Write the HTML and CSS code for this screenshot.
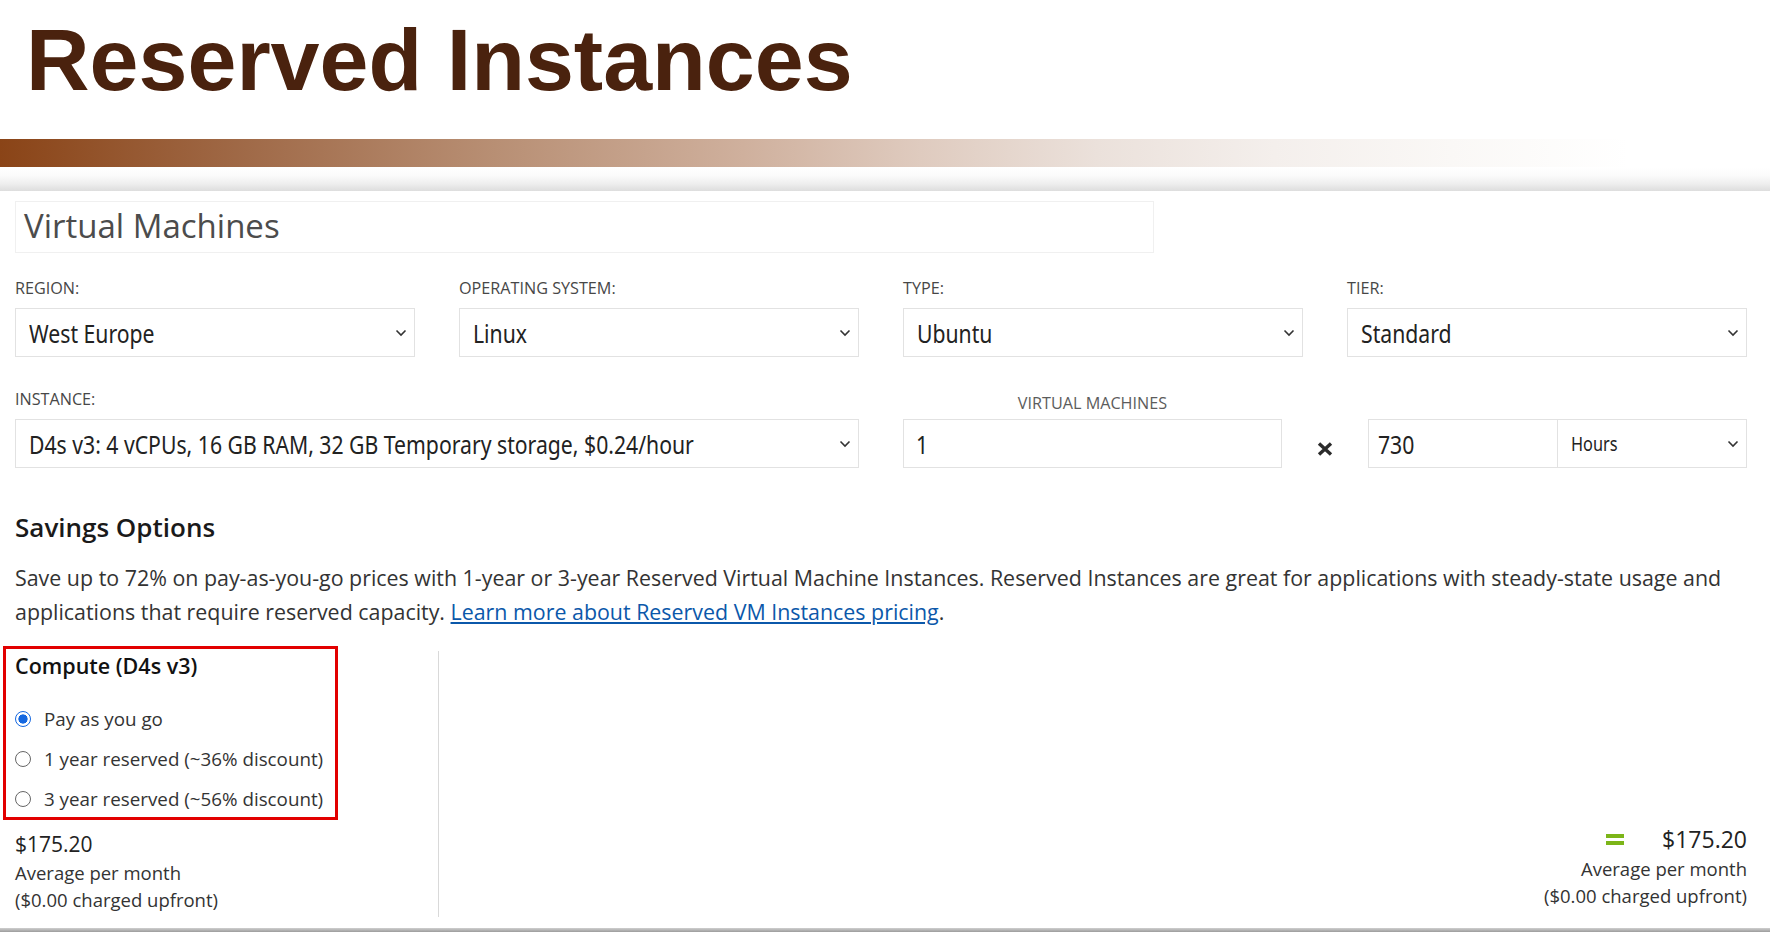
FILE: index.html
```html
<!DOCTYPE html>
<html lang="en">
<head>
<meta charset="utf-8">
<title>Reserved Instances</title>
<link rel="stylesheet" href="styles.css">
</head>
<body>
<header class="slide-header">
  <h1 class="slide-title">Reserved Instances</h1>
</header>
<div class="accent-bar"></div>
<div class="panel-shadow"></div>
<main class="panel">
  <div class="vm-head"><h2>Virtual Machines</h2></div>

  <div class="grid-row">
    <div class="field">
      <span class="field-label">REGION:</span>
      <div class="select"><span class="val">West Europe</span><svg class="chev" width="12" height="8" viewBox="0 0 12 8"><path d="M1.5 1.5 L6 6 L10.5 1.5" fill="none" stroke="#333" stroke-width="1.6"/></svg></div>
    </div>
    <div class="field">
      <span class="field-label">OPERATING SYSTEM:</span>
      <div class="select"><span class="val">Linux</span><svg class="chev" width="12" height="8" viewBox="0 0 12 8"><path d="M1.5 1.5 L6 6 L10.5 1.5" fill="none" stroke="#333" stroke-width="1.6"/></svg></div>
    </div>
    <div class="field">
      <span class="field-label">TYPE:</span>
      <div class="select"><span class="val">Ubuntu</span><svg class="chev" width="12" height="8" viewBox="0 0 12 8"><path d="M1.5 1.5 L6 6 L10.5 1.5" fill="none" stroke="#333" stroke-width="1.6"/></svg></div>
    </div>
    <div class="field">
      <span class="field-label">TIER:</span>
      <div class="select"><span class="val">Standard</span><svg class="chev" width="12" height="8" viewBox="0 0 12 8"><path d="M1.5 1.5 L6 6 L10.5 1.5" fill="none" stroke="#333" stroke-width="1.6"/></svg></div>
    </div>
  </div>

  <div class="row2">
    <div class="field instance">
      <span class="field-label">INSTANCE:</span>
      <div class="select"><span class="val">D4s v3: 4 vCPUs, 16 GB RAM, 32 GB Temporary storage, $0.24/hour</span><svg class="chev" width="12" height="8" viewBox="0 0 12 8"><path d="M1.5 1.5 L6 6 L10.5 1.5" fill="none" stroke="#333" stroke-width="1.6"/></svg></div>
    </div>
    <div class="field vm">
      <span class="field-label vm-label">VIRTUAL MACHINES</span>
      <div class="input vm-input"><span class="val">1</span></div>
    </div>
    <div class="times"><svg width="16" height="14" viewBox="0 0 16 14"><path d="M2 1.5 L14 12.5 M14 1.5 L2 12.5" fill="none" stroke="#2b2b2b" stroke-width="3.4"/></svg></div>
    <div class="hours">
      <div class="input hours-input"><span class="val">730</span></div>
      <div class="select hours-select"><span class="val">Hours</span><svg class="chev" width="12" height="8" viewBox="0 0 12 8"><path d="M1.5 1.5 L6 6 L10.5 1.5" fill="none" stroke="#333" stroke-width="1.6"/></svg></div>
    </div>
  </div>

  <h3 class="savings-title">Savings Options</h3>
  <p class="savings-text">Save up to 72% on pay-as-you-go prices with 1-year or 3-year Reserved Virtual Machine Instances. Reserved Instances are great for applications with steady-state usage and applications that require reserved capacity. <a href="#">Learn more about Reserved VM Instances pricing</a>.</p>

  <div class="results">
    <div class="left-col">
      <div class="compute-box">
        <h4>Compute (D4s v3)</h4>
        <div class="opt-list">
          <label class="opt"><input type="radio" name="plan" checked><span>Pay as you go</span></label>
          <label class="opt"><input type="radio" name="plan"><span>1 year reserved (~36% discount)</span></label>
          <label class="opt"><input type="radio" name="plan"><span>3 year reserved (~56% discount)</span></label>
        </div>
      </div>
      <div class="price">
        <div class="amount">$175.20</div>
        <div class="sub">Average per month</div>
        <div class="sub last">($0.00 charged upfront)</div>
      </div>
    </div>
    <div class="divider"></div>
    <div class="right-col">
      <div class="total"><span class="eq"></span><span>$175.20</span></div>
      <div class="sub">Average per month</div>
      <div class="sub last">($0.00 charged upfront)</div>
    </div>
  </div>
</main>
<div class="bottom-edge"></div>
</body>
</html>
```

FILE: styles.css
```css
* { box-sizing: border-box; }
html, body { margin: 0; padding: 0; background: #fff; }
body {
  width: 1770px;
  height: 932px;
  overflow: hidden;
  font-family: "Open Sans", "Noto Sans", sans-serif;
  color: #333;
}

.slide-header { height: 139px; padding: 16px 0 0 26px; }
.slide-title {
  margin: 0;
  font: 700 88px/88px "Liberation Sans", Arial, sans-serif;
  color: #4a220e;
}

.accent-bar {
  height: 28px;
  background: linear-gradient(to right,
    #8a4417 0%, #a06a48 14%, #b88f74 28%, #cfb09d 42%,
    #dfcbbf 52%, #ebe1db 62%, #f4efec 72%, #faf8f6 82%, rgba(255,255,255,0) 92%);
}
.panel-shadow {
  height: 24px;
  background: linear-gradient(to bottom, #ffffff 0%, #fbfbfb 35%, #eeeeee 70%, #dddddd 100%);
}

.panel { padding: 10px 23px 0 15px; }

.vm-head {
  width: 1139px;
  height: 52px;
  border: 1px solid #f0f0f0;
  padding: 1px 0 3px 8px;
}
.vm-head h2 {
  margin: 0;
  font: 400 33px/46px "Open Sans", sans-serif;
  color: #4c4c4c;
}

.grid-row {
  display: grid;
  grid-template-columns: repeat(4, 400px);
  column-gap: 44px;
  margin-top: 25px;
}
.field { display: flex; flex-direction: column; }
.field-label {
  font: 400 16.2px/20px "Open Sans", sans-serif;
  color: #474747;
  margin-bottom: 10px;
}

.select, .input {
  height: 49px;
  border: 1px solid #e2e2e2;
  display: flex;
  align-items: center;
  font-family: "Noto Sans", "Open Sans", sans-serif;
  font-size: 26px;
  color: #222;
  white-space: nowrap;
  overflow: hidden;
}
.val {
  flex: 1;
  min-width: 0;
  display: block;
  transform: scaleX(0.815);
  transform-origin: 0 50%;
}
.select { padding: 0 7px 0 13px; }
.input { padding-left: 12px; }
.chev { flex: none; margin-left: 8px; }

.row2 { display: flex; align-items: flex-end; margin-top: 32px; }
.instance { width: 844px; margin-right: 44px; }
.vm { width: 379px; }
.vm-label { text-align: center; color: #5c5c5c; margin-bottom: 6px; }
.times {
  width: 86px;
  height: 49px;
  padding-top: 10px;
  display: flex;
  align-items: center;
  justify-content: center;
}
.hours { width: 379px; display: flex; }
.hours-input { width: 190px; padding-left: 9px; }
.hours-select { width: 189px; border-left: none; font-size: 20px; padding-left: 13px; }

.savings-title {
  margin: 41px 0 0;
  font: 600 26px/36px "Open Sans", sans-serif;
  color: #1a1a1a;
}
.savings-text {
  margin: 16px 0 0;
  font: 400 21.4px/34px "Open Sans", sans-serif;
  color: #333;
}
.savings-text a { color: #0b58aa; text-decoration: underline; }

.results { display: flex; height: 271px; margin-top: 17px; }
.left-col { width: 423px; flex: none; }
.compute-box {
  margin-left: -12px;
  width: 335px;
  height: 174px;
  border: 3px solid #e20000;
  padding: 2px 0 0 9px;
}
.compute-box h4 {
  margin: 0;
  font: 600 21.5px/30px "Open Sans", sans-serif;
  color: #111;
}
.opt-list { margin-top: 18px; }
.opt {
  display: flex;
  align-items: center;
  gap: 13px;
  height: 40px;
  font: 400 18.8px/26px "Open Sans", sans-serif;
  color: #333;
}
.opt input {
  appearance: none;
  -webkit-appearance: none;
  flex: none;
  width: 16px;
  height: 16px;
  margin: 0;
  border: 1px solid #666;
  border-radius: 50%;
  background: #fff;
}
.opt input:checked {
  border: 1.5px solid #1467e0;
  background: radial-gradient(circle, #1467e0 0 4.3px, #fff 4.9px);
}

.price { margin-top: 9px; }
.amount { font-size: 21px; line-height: 30px; color: #222; }
.sub { font-size: 18.5px; line-height: 27px; color: #333; }
.sub.last { line-height: 28px; }

.divider { width: 1px; flex: none; background: #d9d9d9; margin-top: 5px; height: 266px; }

.right-col {
  flex: 1;
  display: flex;
  flex-direction: column;
  align-items: flex-end;
  justify-content: flex-end;
  padding-bottom: 7px;
}
.total {
  display: flex;
  align-items: center;
  height: 32px;
  font-size: 23px;
  line-height: 32px;
  color: #222;
}
.eq {
  width: 18px;
  height: 11px;
  border-top: 4px solid #7cb518;
  border-bottom: 4px solid #7cb518;
  margin-right: 38px;
}

.bottom-edge {
  margin-top: 11px;
  height: 4px;
  background: linear-gradient(to bottom, #cfcfcf, #9c9c9c);
}
```
